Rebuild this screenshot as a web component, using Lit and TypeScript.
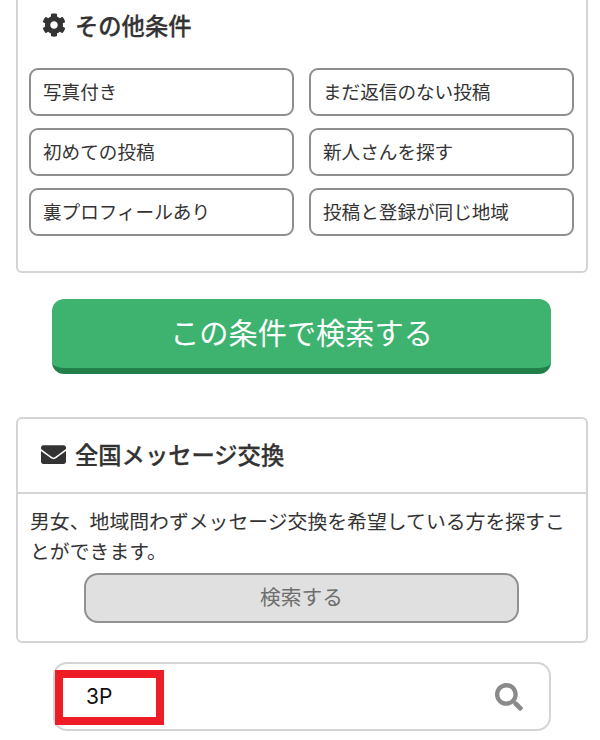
import { LitElement, html, css } from "lit";
import { customElement } from "lit/decorators.js";

const GEAR = "M487.4 315.7l-42.6-24.6c4.3-23.2 4.3-47 0-70.2l42.6-24.6c4.9-2.8 7.1-8.6 5.5-14-11.1-35.6-30-67.8-54.7-94.6-3.8-4.1-10-5.1-14.8-2.3L380.8 110c-17.9-15.4-38.5-27.3-60.8-35.1V25.8c0-5.6-3.9-10.5-9.4-11.7-36.7-8.2-74.3-7.8-109.2 0-5.5 1.2-9.4 6.1-9.4 11.7V75c-22.2 7.9-42.8 19.8-60.8 35.1L88.7 85.5c-4.9-2.8-11-1.9-14.8 2.3-24.7 26.7-43.6 58.9-54.7 94.6-1.7 5.4.6 11.2 5.5 14L67.3 221c-4.3 23.2-4.3 47 0 70.2l-42.6 24.6c-4.9 2.8-7.1 8.6-5.5 14 11.1 35.6 30 67.8 54.7 94.6 3.8 4.1 10 5.1 14.8 2.3l42.6-24.6c17.9 15.4 38.5 27.3 60.8 35.1v49.2c0 5.6 3.9 10.5 9.4 11.7 36.7 8.2 74.3 7.8 109.2 0 5.5-1.2 9.4-6.1 9.4-11.7v-49.2c22.2-7.9 42.8-19.8 60.8-35.1l42.6 24.6c4.9 2.8 11 1.9 14.8-2.3 24.7-26.7 43.6-58.9 54.7-94.6 1.5-5.5-.7-11.3-5.6-14.1zM256 336c-44.1 0-80-35.9-80-80s35.9-80 80-80 80 35.9 80 80-35.9 80-80 80z";
const MAIL = "M502.3 190.8c3.9-3.1 9.7-.2 9.7 4.7V400c0 26.5-21.5 48-48 48H48c-26.5 0-48-21.5-48-48V195.6c0-5 5.7-7.8 9.7-4.7 22.4 17.4 52.1 39.5 154.1 113.6 21.1 15.4 56.7 47.8 92.2 47.6 35.7.3 72-32.8 92.3-47.6 102-74.1 131.6-96.3 154-113.7zM256 320c23.2.4 56.6-29.2 73.4-41.4 132.7-96.3 142.8-104.7 173.4-128.7 5.8-4.5 9.2-11.5 9.2-18.9v-19c0-26.5-21.5-48-48-48H48C21.5 64 0 85.5 0 112v19c0 7.4 3.4 14.3 9.2 18.9 30.6 23.9 40.7 32.4 173.4 128.7 16.8 12.2 50.2 41.8 73.4 41.4z";
const SEARCH = "M505 442.7L405.3 343c-4.5-4.5-10.6-7-17-7H372c27.6-35.3 44-79.7 44-128C416 93.1 322.9 0 208 0S0 93.1 0 208s93.1 208 208 208c48.3 0 92.7-16.4 128-44v16.3c0 6.4 2.5 12.5 7 17l99.7 99.7c9.4 9.4 24.6 9.4 33.9 0l28.3-28.3c9.4-9.4 9.4-24.6.1-34zM208 336c-70.7 0-128-57.2-128-128 0-70.7 57.2-128 128-128 70.7 0 128 57.2 128 128 0 70.7-57.2 128-128 128z";

const icon = (d: string, cls: string) => html`<svg class=${cls} viewBox="0 0 512 512" aria-hidden="true"><path d=${d}></path></svg>`;

const OPTIONS = ["写真付き", "まだ返信のない投稿", "初めての投稿", "新人さんを探す", "裏プロフィールあり", "投稿と登録が同じ地域"];

@customElement("app-root")
export class AppRoot extends LitElement {
  static styles = css`
    :host {
      display: block;
      width: 600px;
      height: 740px;
      overflow: hidden;
      background: #fff;
      color: #333;
      font-family: "Noto Sans CJK JP", "Noto Sans", sans-serif;
    }
    * { box-sizing: border-box; }
    .card {
      margin: 0 12px 0 16px;
      border: 2px solid #d4d4d4;
      border-radius: 6px;
      background: #fff;
    }
    .conditions {
      height: 273px;
      border-top: none;
      border-radius: 0 0 6px 6px;
      padding: 0 11px;
    }
    .heading {
      display: flex;
      align-items: center;
      gap: 9px;
      font-size: 23.3px;
      font-weight: 500;
      -webkit-text-stroke: 0.25px #333;
      line-height: 34px;
      color: #333;
    }
    .conditions .heading { padding: 6px 0 0 13px; height: 43px; }
    .ic { width: 25px; height: 25px; fill: #333; flex: none; }
    .conditions .ic { width: 24px; height: 24px; }
    .grid {
      display: grid;
      grid-template-columns: 265px 265px;
      column-gap: 15px;
      row-gap: 12px;
      margin-top: 25px;
    }
    .opt {
      height: 48px;
      border: 2px solid #8e8e8e;
      border-radius: 9px;
      padding: 0 12px 4px;
      display: flex;
      align-items: center;
      font-size: 18.6px;
      color: #333;
      white-space: nowrap;
    }
    .go-wrap { display: flex; justify-content: center; margin: 26px 49px 43px 52px; }
    .go {
      width: 100%;
      height: 75px;
      border-radius: 12px;
      background: #3eb370;
      border-bottom: 6px solid #21804a;
      color: #fff;
      font-size: 29.2px;
      padding-bottom: 6px;
      display: flex;
      align-items: center;
      justify-content: center;
    }
    .exchange { height: 226px; }
    .exchange .heading {
      height: 75px;
      padding: 0 0 3px 23px;
      border-bottom: 2px solid #d4d4d4;
    }
    .desc {
      margin: 0;
      padding: 12px 11px 0 12px;
      font-size: 19.85px;
      line-height: 30px;
      color: #333;
    }
    .gray {
      margin: 7px 67px 0 66px;
      height: 50px;
      border: 2px solid #919191;
      border-radius: 14px;
      background: #e0e0e0;
      color: #6e6e6e;
      font-size: 20.7px;
      padding-bottom: 4px;
      display: flex;
      align-items: center;
      justify-content: center;
    }
    .search {
      position: relative;
      margin: 19px 49px 0 53px;
      height: 69px;
      border: 2px solid #d4d4d4;
      border-radius: 14px;
      display: flex;
      align-items: center;
      justify-content: space-between;
      padding: 0 26px 0 31px;
      background: #fff;
    }
    .term {
      font-family: Inter, Roboto, sans-serif;
      font-size: 21px;
      color: #111;
    }
    .mag { width: 28px; height: 28px; fill: #8a8a8a; }
    .mark {
      position: absolute;
      left: 0;
      top: 6px;
      width: 109px;
      height: 55px;
      border: 8px solid #ee1c25;
    }
  `;

  render() {
    return html`
      <section class="card conditions">
        <div class="heading">${icon(GEAR, "ic")}<span>その他条件</span></div>
        <div class="grid">${OPTIONS.map((o) => html`<div class="opt">${o}</div>`)}</div>
      </section>
      <div class="go-wrap"><div class="go">この条件で検索する</div></div>
      <section class="card exchange">
        <div class="heading">${icon(MAIL, "ic")}<span>全国メッセージ交換</span></div>
        <p class="desc">男女、地域問わずメッセージ交換を希望している方を探すことができます。</p>
        <div class="gray">検索する</div>
      </section>
      <div class="search">
        <span class="term">3P</span>
        ${icon(SEARCH, "mag")}
        <div class="mark"></div>
      </div>
    `;
  }
}
